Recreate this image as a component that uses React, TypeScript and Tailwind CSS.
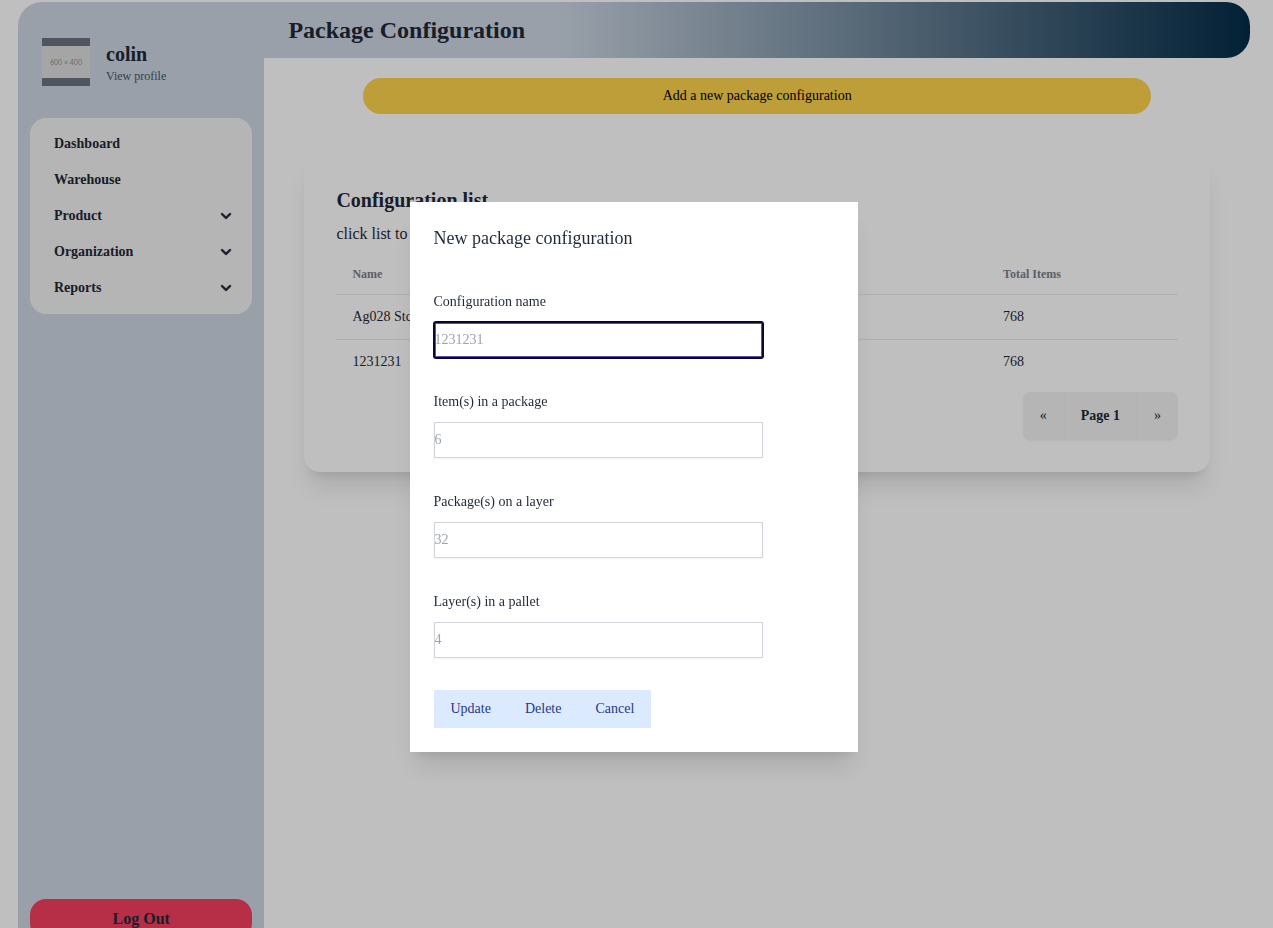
import React from "react";

const navItems = [
  { label: "Dashboard", expandable: false },
  { label: "Warehouse", expandable: false },
  { label: "Product", expandable: true },
  { label: "Organization", expandable: true },
  { label: "Reports", expandable: true },
];

const rows = [
  { name: "Ag028 Std", total: 768 },
  { name: "1231231", total: 768 },
];

const fields = [
  { id: "name", label: "Configuration name", placeholder: "1231231", active: true },
  { id: "items", label: "Item(s) in a package", placeholder: "6", active: false },
  { id: "packages", label: "Package(s) on a layer", placeholder: "32", active: false },
  { id: "layers", label: "Layer(s) in a pallet", placeholder: "4", active: false },
];

function ChevronDown() {
  return (
    <svg
      className="h-5 w-5"
      viewBox="0 0 20 20"
      fill="currentColor"
      stroke="currentColor"
      strokeWidth="0.4"
      aria-hidden="true"
    >
      <path
        fillRule="evenodd"
        clipRule="evenodd"
        d="M5.293 7.293a1 1 0 011.414 0L10 10.586l3.293-3.293a1 1 0 111.414 1.414l-4 4a1 1 0 01-1.414 0l-4-4a1 1 0 010-1.414z"
      />
    </svg>
  );
}

function Sidebar() {
  return (
    <aside className="flex w-1/5 flex-col rounded-tl-3xl bg-[#ccd6e3] px-3 pt-9 pb-3">
      <div className="flex items-center gap-4 px-3">
        <div className="flex h-12 w-12 items-center bg-[#6b7280]">
          <div className="flex h-8 w-full items-center justify-center bg-[#dddddd] font-['Lato',sans-serif] text-[7px] text-[#909090]">
            600 × 400
          </div>
        </div>
        <div>
          <h2 className="text-xl leading-7 font-bold">colin</h2>
          <a href="#profile" className="block text-xs leading-4 text-[#4b5563]">
            View profile
          </a>
        </div>
      </div>
      <nav className="mt-8 rounded-2xl bg-[#f2f2f2] p-2">
        <ul>
          {navItems.map((item) => (
            <li key={item.label}>
              {item.expandable ? (
                <button
                  type="button"
                  className="flex w-full items-center justify-between py-2 pr-2 pl-4 text-sm leading-5 font-bold"
                >
                  {item.label}
                  <ChevronDown />
                </button>
              ) : (
                <a href="#page" className="block py-2 pl-4 text-sm leading-5 font-bold">
                  {item.label}
                </a>
              )}
            </li>
          ))}
        </ul>
      </nav>
      <button type="button" className="mt-auto rounded-2xl bg-[#f43f5e] py-2 text-base leading-6 font-bold">
        Log Out
      </button>
    </aside>
  );
}

function ConfigurationCard() {
  return (
    <section className="mx-10 mt-10 flex flex-col gap-2 rounded-2xl bg-white p-8 shadow-xl">
      <h2 className="text-xl leading-7 font-bold">Configuration list</h2>
      <p className="text-base leading-6">click list to</p>
      <table className="w-full table-fixed text-left">
        <thead>
          <tr className="border-b border-[#eaeaea] text-xs leading-4 text-[#7b8088]">
            <th className="px-4 py-3 font-bold">Name</th>
            <th className="w-[191px] px-4 py-3 font-bold">Total Items</th>
          </tr>
        </thead>
        <tbody className="text-sm leading-5">
          {rows.map((row) => (
            <tr key={row.name} className="border-b border-[#eaeaea] last:border-b-0">
              <td className="px-4 py-3">{row.name}</td>
              <td className="px-4 py-3">{row.total}</td>
            </tr>
          ))}
        </tbody>
      </table>
      <div className="flex h-12 self-end rounded-lg bg-[#f2f2f2] text-sm shadow-xs">
        <button type="button" className="px-[17px]">
          «
        </button>
        <button type="button" className="border-x border-[#eeeeee] px-4 font-bold">
          Page 1
        </button>
        <button type="button" className="px-[17px]">
          »
        </button>
      </div>
    </section>
  );
}

function ConfigurationDialog() {
  return (
    <div className="fixed inset-0 flex items-center justify-center bg-black/25 pt-[26px] pr-[6px]">
      <div
        role="dialog"
        aria-modal="true"
        aria-labelledby="dialog-title"
        className="w-full max-w-md bg-white p-6 shadow-xl"
      >
        <h3 id="dialog-title" className="text-lg leading-6">
          New package configuration
        </h3>
        <form>
          {fields.map((field) => (
            <div key={field.id} className="h-[100px] pt-[42px]">
              <label htmlFor={field.id} className="block text-sm leading-5">
                {field.label}
              </label>
              <input
                id={field.id}
                type="text"
                placeholder={field.placeholder}
                className={
                  field.active
                    ? "mt-[10px] block h-9 w-full max-w-[329px] rounded-xs border border-[#0b0733] text-sm shadow-[inset_0_0_0_1px_#5a50b0] outline-2 -outline-offset-1 outline-[#0b0733] placeholder:text-[#9ca3af]"
                    : "mt-[10px] block h-9 w-full max-w-[329px] border border-[#d1d5db] text-sm shadow-xs placeholder:text-[#9ca3af]"
                }
              />
            </div>
          ))}
          <div className="mt-10 flex">
            {["Update", "Delete", "Cancel"].map((action) => (
              <button
                key={action}
                type="button"
                className="border border-[#dbeafe] bg-[#dbeafe] px-4 py-2 text-sm leading-5 text-[#1e3a8a]"
              >
                {action}
              </button>
            ))}
          </div>
        </form>
      </div>
    </div>
  );
}

export default function App() {
  return (
    <div className="h-screen overflow-hidden bg-white font-['Liberation_Serif',serif] text-[#1f2937]">
      <div className="mt-0.5 mr-[23px] ml-[18px] flex h-[calc(100vh+21px)]">
        <Sidebar />
        <main className="flex-1">
          <header className="flex h-14 items-center rounded-r-3xl bg-linear-to-r/srgb from-[#ccd6e3] from-30% to-[#042c48] px-6">
            <h1 className="text-2xl leading-8 font-bold">Package Configuration</h1>
          </header>
          <button
            type="button"
            className="mx-auto mt-5 block w-4/5 rounded-full bg-[#fcd34d] py-2 text-sm leading-5 text-black"
          >
            Add a new package configuration
          </button>
          <ConfigurationCard />
        </main>
      </div>
      <ConfigurationDialog />
    </div>
  );
}
